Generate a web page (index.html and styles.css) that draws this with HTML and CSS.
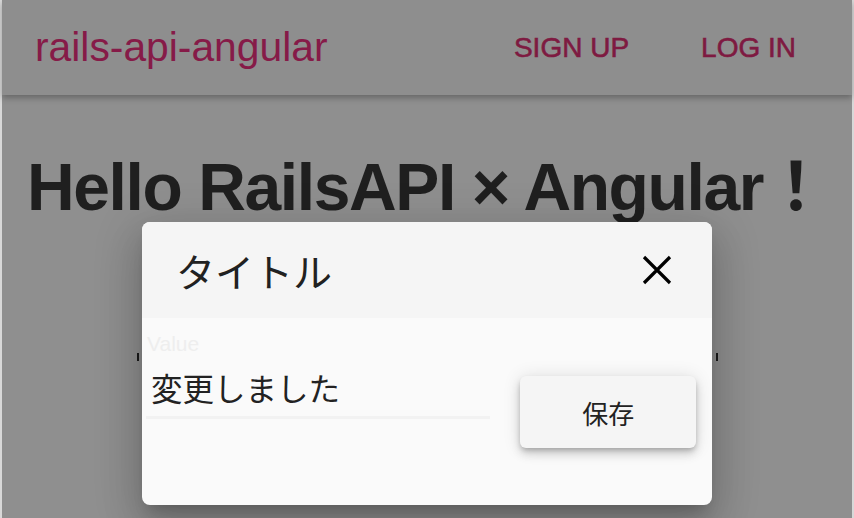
FILE: index.html
```html
<!DOCTYPE html>
<html lang="ja">
<head>
    <meta charset="UTF-8">
    <meta name="viewport" content="width=device-width, initial-scale=1.0">
    <title>rails-api-angular</title>
    <link rel="stylesheet" href="styles.css">
</head>
<body>
    <div class="page">
        <!-- Toolbar -->
        <header class="toolbar">
            <span class="brand">rails-api-angular</span>
            <nav class="nav">
                <a class="nav-link">SIGN UP</a>
                <a class="nav-link">LOG IN</a>
            </nav>
        </header>

        <main class="content">
            <h1>Hello RailsAPI × Angular！</h1>
            <div class="form-edge">
                <span class="tick"></span>
                <span class="tick"></span>
            </div>
        </main>
    </div>

    <!-- Edit dialog -->
    <div class="overlay">
        <div class="dialog">
            <div class="dialog-header">
                <span class="dialog-title">タイトル</span>
                <button class="close-btn" aria-label="close">
                    <svg width="30" height="30" viewBox="0 0 30 30">
                        <path d="M2 2 L28 28 M28 2 L2 28" stroke="#000" stroke-width="3.2" fill="none"/>
                    </svg>
                </button>
            </div>
            <div class="dialog-body">
                <div class="field">
                    <label class="field-label">Value</label>
                    <div class="field-value">変更しました</div>
                    <div class="field-line"></div>
                </div>
                <button class="save-btn">保存</button>
            </div>
        </div>
    </div>
</body>
</html>
```

FILE: styles.css
```css
body {
    margin: 0;
    padding: 0;
    background-color: #d8d8d8;
    font-family: "Liberation Sans", "Noto Sans CJK JP", sans-serif;
    height: 518px;
    overflow: hidden;
}
.page {
    margin: 0 2px;
    height: 518px;
    background-color: #8f8f8f;
    position: relative;
}

/* toolbar */
.toolbar {
    height: 95px;
    display: flex;
    align-items: center;
    justify-content: space-between;
    padding: 0 56px 0 33px;
    background-color: #8e8e8e;
    box-shadow: 0 3px 6px rgba(0, 0, 0, 0.28);
    position: relative;
}
.brand {
    font-size: 40.8px;
    color: #861b48;
}
.nav {
    display: flex;
    gap: 72px;
}
.nav-link {
    font-size: 28px;
    color: #7e1a41;
    -webkit-text-stroke: 0.6px #7e1a41;
}

/* page content */
.content {
    padding: 0 0 0 25px;
}
.content h1 {
    margin: 54px 0 0;
    font-size: 66px;
    letter-spacing: -1.4px;
    color: #1f1f1f;
    line-height: 76px;
    white-space: nowrap;
}
.form-edge {
    display: flex;
    justify-content: space-between;
    margin: 128px 0 0 110px;
    width: 581px;
}
.tick {
    width: 2px;
    height: 8px;
    background-color: #1a1a1a;
}

/* dialog */
.overlay {
    position: absolute;
    top: 0;
    left: 0;
    right: 0;
    bottom: 0;
    display: flex;
    justify-content: center;
    align-items: flex-start;
    padding-top: 222px;
}
.dialog {
    width: 570px;
    height: 283px;
    border-radius: 8px;
    overflow: hidden;
    background-color: #fafafa;
    box-shadow: 0 11px 15px -7px rgba(0, 0, 0, 0.2), 0 24px 38px 3px rgba(0, 0, 0, 0.14), 0 9px 46px 8px rgba(0, 0, 0, 0.12);
}
.dialog-header {
    height: 96px;
    background-color: #f5f5f5;
    display: flex;
    align-items: center;
    justify-content: space-between;
    padding: 0 40px 0 34px;
}
.dialog-title {
    font-size: 39px;
    color: #212121;
}
.close-btn {
    border: none;
    background: none;
    padding: 0;
    width: 30px;
    height: 30px;
    cursor: pointer;
}
.dialog-body {
    display: flex;
    align-items: flex-start;
    padding: 14px 16px 0 4px;
    gap: 30px;
}
.field {
    width: 345px;
}
.field-label {
    display: block;
    font-size: 21px;
    color: #eeeeee;
    margin-left: 1px;
}
.field-value {
    margin: 8px 0 0 5px;
    font-size: 31.5px;
    color: #222222;
}
.field-line {
    height: 3px;
    margin-top: 6px;
    background-color: #f2f2f2;
}
.save-btn {
    margin-top: 44px;
    width: 176px;
    height: 72px;
    border: none;
    border-radius: 6px;
    background-color: #f5f5f5;
    font-family: "Noto Sans CJK JP", sans-serif;
    font-size: 26px;
    color: #222222;
    box-shadow: 0 3px 5px -1px rgba(0, 0, 0, 0.2), 0 6px 10px 0 rgba(0, 0, 0, 0.14), 0 1px 18px 0 rgba(0, 0, 0, 0.12);
}
```
